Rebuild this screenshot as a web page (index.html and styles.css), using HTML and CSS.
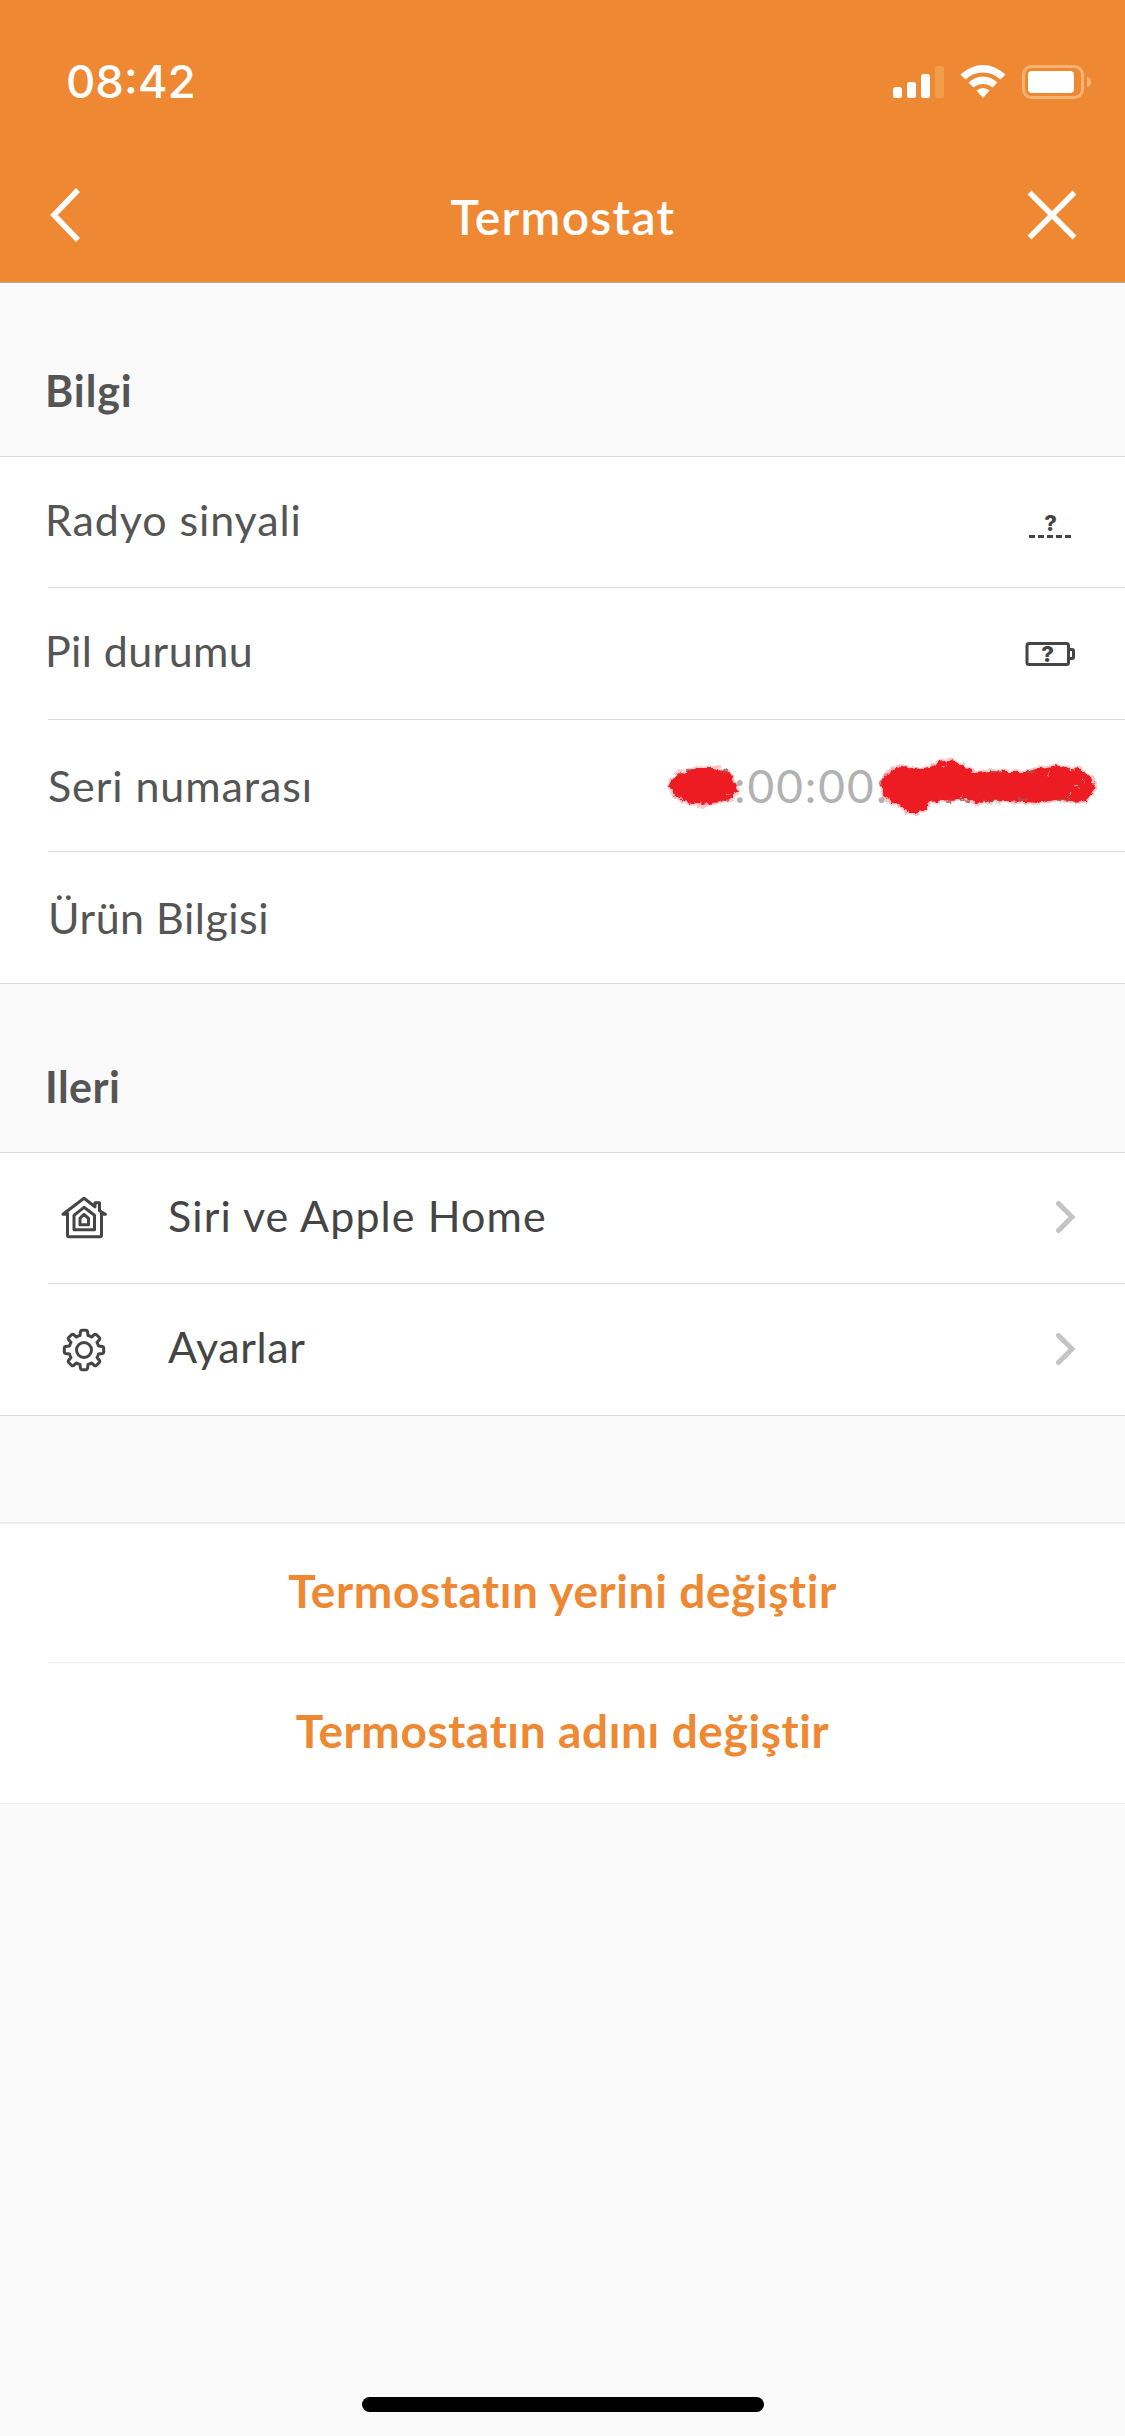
FILE: index.html
```html
<!DOCTYPE html>
<html lang="tr">
<head>
    <meta charset="utf-8">
    <meta name="viewport" content="width=device-width, initial-scale=1">
    <title>Termostat</title>
    <link rel="stylesheet" href="styles.css">
</head>
<body>
    <header class="header">
        <div class="statusbar">
            <span class="clock">08:42</span>
            <svg class="status-icons" viewBox="893 60 200 44" width="200" height="44">
                <g fill="#fff">
                    <rect x="893" y="87" width="9" height="11" rx="2.5"/>
                    <rect x="907" y="82" width="9" height="16" rx="2.5"/>
                    <rect x="921" y="74" width="9" height="24" rx="2.5"/>
                    <rect x="935" y="66" width="9" height="32" rx="2.5" fill="#f19e4c"/>
                    <path d="M960.5 74.5Q971 65 983 65T1005.5 74.5L1000.500 79.500Q993 72.500 983 72.500T965.500 79.500Z"/>
                    <path d="M968.500 82.500Q975 76.500 983 76.500T997.500 82.500L992.500 87.500Q988.500 84 983 84T973.500 87.500Z"/>
                    <path d="M976.500 90.500Q979.500 88 983 88T989.500 90.500L983 98Z"/>
                    <rect x="1028" y="71" width="46" height="22" rx="4"/>
                </g>
                <rect x="1023.500" y="66.500" width="59" height="31" rx="8" fill="none" stroke="#f5b273" stroke-width="3"/>
                <path d="M1087 76.500Q1091 78 1091 82T1087 87.500Z" fill="#f5b273"/>
            </svg>
        </div>
        <nav class="navbar">
            <svg class="nav-icon" viewBox="1 0 60 60" width="60" height="60">
                <path d="M38 5 14 30 38 55" fill="none" stroke="#fff" stroke-width="5.500"/>
            </svg>
            <h1 class="title">Termostat</h1>
            <svg class="nav-icon" viewBox="0 0 60 60" width="60" height="60">
                <path d="M7.500 7.500 52.500 52.500M52.500 7.500 7.500 52.500" fill="none" stroke="#fff" stroke-width="5.500"/>
            </svg>
        </nav>
    </header>

    <main>
        <h2 class="section-title first">Bilgi</h2>
        <ul class="list">
            <li class="row raised">
                <span class="label radio">Radyo sinyali</span>
                <svg class="state-icon" viewBox="1020 506 60 32" width="60" height="32">
                    <text x="1050.500" y="531" class="question">?</text>
                    <path d="M1029 536.500H1071" stroke="#454545" stroke-width="3" stroke-dasharray="6 3"/>
                </svg>
            </li>
            <li class="row raised">
                <span class="label battery">Pil durumu</span>
                <svg class="state-icon" viewBox="1020 638 60 32" width="60" height="32">
                    <g fill="none" stroke="#454545" stroke-width="3">
                        <rect x="1027" y="643.500" width="41.500" height="21" rx="2"/>
                        <path d="M1069 649.500H1072Q1073.500 649.500 1073.500 651V657Q1073.500 658.500 1072 658.500H1069"/>
                    </g>
                    <text x="1047.500" y="661.500" class="question">?</text>
                </svg>
            </li>
            <li class="row">
                <span class="label serial">Seri numarası</span>
                <span class="value">:00:00:
                    <svg class="scribble" viewBox="660 750 440 70" width="440" height="70">
                        <filter id="rough" x="-5%" y="-20%" width="110%" height="140%">
                            <feTurbulence type="fractalNoise" baseFrequency=".16" numOctaves="3" seed="4"/>
                            <feDisplacementMap in="SourceGraphic" scale="7" xChannelSelector="R" yChannelSelector="G"/>
                        </filter>
                        <g filter="url(#rough)">
                            <g fill="#ed1c24" stroke="#ed1c24" stroke-opacity=".25" stroke-width="4" stroke-linejoin="round">
                                <path d="M669 787 672 779 680 772 690 770 699 768 712 768 723 770 731 774 734 783 738 791 732 798 724 802 713 803 704 805 691 803 680 800 674 795Z"/>
                                <path d="M882 790 881 782 887 774 896 768 905 766 916 769 930 767 939 762 949 760 959 763 968 768 977 773 991 771 1008 772 1027 772 1040 768 1054 766 1068 768 1081 769 1090 777 1095 786 1092 794 1085 801 1070 802 1055 800 1040 803 1024 802 1007 801 990 802 976 803 966 799 949 800 930 802 925 810 915 813 907 813 904 807 893 803 886 798Z"/>
                            </g>
                            <path d="M686 770H696M721 771H728M720 801H728M988 772H1002M1027 772H1036M946 801H950M961 801H969M983 801H998M1018 800H1028M1056 800H1070" stroke="#a5565a" stroke-width="2" opacity=".7"/>
                            <path d="M679 797 683 799M727 793 731 796M885 796 890 800M941 767 947 764M960 797 964 794M1046 775 1050 772M1075 785 1080 790M1068 797 1072 793M1082 778 1086 782" stroke="#fff" stroke-width="1" opacity=".6"/>
                        </g>
                    </svg>
                </span>
            </li>
            <li class="row">
                <span class="label product">Ürün Bilgisi</span>
            </li>
        </ul>

        <h2 class="section-title">Ileri</h2>
        <ul class="list">
            <li class="row raised link">
                <svg class="row-icon" viewBox="0.500 1.700 50 50" width="50" height="50">
                    <g fill="none" stroke="#454545" stroke-width="3" stroke-linejoin="round" stroke-linecap="round">
                        <path d="M9 22V44Q9 45.500 10.500 45.500H41.500Q43 45.500 43 44V22M9 23H4.500L25.500 7 36.500 15.500V11.500H41V19.500L47 23H43"/>
                        <path d="M15.500 24 25.500 16 36 24V38.500H15.500Z"/>
                        <path d="M21.500 27 25.500 23 30 27V33.500H21.500Z"/>
                    </g>
                </svg>
                <span class="label siri">Siri ve Apple Home</span>
                <svg class="chevron" viewBox="2 1.500 24 36" width="24" height="36">
                    <path d="M4.500 5 18 18.500 4.500 32" fill="none" stroke="#c4c4c6" stroke-width="5" stroke-linecap="round"/>
                </svg>
            </li>
            <li class="row raised link">
                <svg class="row-icon" viewBox="-25 -25 50 50" width="50" height="50">
                    <g fill="none" stroke="#454545" stroke-width="3" stroke-linejoin="round">
                        <circle r="7.500"/>
                        <path d="M-4 -14.500 -3.500 -18.500Q-3.200 -19.700 -2 -19.700H2Q3.200 -19.700 3.500 -18.500L4 -14.500Q6 -14 7.500 -13L10.500 -15.500Q11.500 -16.200 12.500 -15.300L15.300 -12.500Q16.200 -11.500 15.500 -10.500L13 -7.500Q14 -6 14.500 -4L18.500 -3.500Q19.700 -3.200 19.700 -2V2Q19.700 3.200 18.500 3.500L14.500 4Q14 6 13 7.500L15.500 10.500Q16.200 11.500 15.300 12.500L12.500 15.300Q11.500 16.200 10.500 15.500L7.500 13Q6 14 4 14.500L3.500 18.500Q3.200 19.700 2 19.700H-2Q-3.200 19.700 -3.500 18.500L-4 14.500Q-6 14 -7.500 13L-10.500 15.500Q-11.500 16.200 -12.500 15.300L-15.300 12.500Q-16.200 11.500 -15.500 10.500L-13 7.500Q-14 6 -14.500 4L-18.500 3.500Q-19.700 3.200 -19.700 2V-2Q-19.700 -3.200 -18.500 -3.500L-14.500 -4Q-14 -6 -13 -7.500L-15.500 -10.500Q-16.200 -11.500 -15.300 -12.500L-12.500 -15.300Q-11.500 -16.200 -10.500 -15.500L-7.500 -13Q-6 -14 -4 -14.500Z"/>
                    </g>
                </svg>
                <span class="label settings">Ayarlar</span>
                <svg class="chevron" viewBox="2 1.500 24 36" width="24" height="36">
                    <path d="M4.500 5 18 18.500 4.500 32" fill="none" stroke="#c4c4c6" stroke-width="5" stroke-linecap="round"/>
                </svg>
            </li>
        </ul>

        <div class="list actions">
            <button class="action">Termostatın yerini değiştir</button>
            <button class="action">Termostatın adını değiştir</button>
        </div>
    </main>

    <div class="home-indicator"></div>
</body>
</html>
```
FILE: styles.css
```css
* {
    box-sizing: border-box;
}
body {
    margin: 0;
    height: 2436px;
    display: flex;
    flex-direction: column;
    background: #fafafa;
    font-family: Lato, "Open Sans", sans-serif;
    color: #555;
}
h1, h2, ul {
    margin: 0;
    padding: 0;
}
.header {
    height: 283px;
    background: #ef8833;
    border-bottom: 1px solid #b2a8a0;
    color: #fff;
}
.statusbar {
    height: 132px;
    padding: 60px 32px 0 66px;
    display: flex;
    justify-content: space-between;
    align-items: flex-start;
}
.clock {
    font-family: Inter, sans-serif;
    font-size: 45.5px;
    font-weight: 500;
    line-height: 44px;
}
.navbar {
    height: 169px;
    padding: 0 43px 4px 41px;
    display: flex;
    justify-content: space-between;
    align-items: center;
}
.title {
    padding: 3px 0 0 3px;
    font-size: 48px;
    font-weight: 600;
    letter-spacing: 1.3px;
}
.section-title {
    height: 168px;
    padding: 66px 0 0 45px;
    font-size: 43px;
    font-weight: 700;
    line-height: 74px;
    letter-spacing: 0.5px;
}
.section-title.first {
    height: 173px;
    padding-top: 71px;
    letter-spacing: 0.9px;
}
.list {
    background: #fff;
    border-top: 1px solid #dcdcde;
    border-bottom: 1px solid #dcdcde;
    list-style: none;
}
.row {
    height: 132px;
    margin-left: 48px;
    padding-right: 45px;
    display: flex;
    align-items: center;
    border-bottom: 1px solid #dcdcde;
    font-size: 43px;
}
.row:first-child {
    height: 131px;
}
.row:last-child {
    height: 131px;
    border-bottom: 0;
}
.raised .label {
    padding-bottom: 6px;
}
.label {
    margin-right: auto;
    letter-spacing: 0.9px;
}
.radio, .battery {
    margin-left: -3px;
}
.battery {
    letter-spacing: 0.4px;
}
.product {
    letter-spacing: 0.5px;
}
.siri {
    letter-spacing: 1.1px;
}
.settings {
    letter-spacing: 0.6px;
}
.question {
    font-family: Inter, sans-serif;
    font-size: 22px;
    font-weight: 800;
    fill: #454545;
    text-anchor: middle;
}
.value {
    position: relative;
    width: 440px;
    margin-right: -20px;
    padding-left: 74px;
    color: #b2b2b2;
    font-size: 46px;
    letter-spacing: 2px;
}
/* red marker over the hidden parts of the serial */
.scribble {
    position: absolute;
    left: 0;
    top: -8px;
}
.link {
    color: #454545;
}
.row-icon {
    margin: 0 59px 0 11px;
}
.actions {
    margin-top: 106px;
    border-top-width: 2px;
    border-color: #ececee;
}
.action {
    display: block;
    width: calc(100% - 48px);
    height: 139px;
    margin-left: 48px;
    padding: 0 48px 5px 0;
    background: none;
    border: 0;
    border-bottom: 1px solid #ececee;
    color: #ef8833;
    font-family: inherit;
    font-size: 46px;
    font-weight: 700;
    letter-spacing: 0.6px;
}
.action:last-child {
    height: 140px;
    border-bottom: 0;
}
.home-indicator {
    width: 402px;
    height: 15px;
    margin: auto auto 24px 362px;
    border-radius: 8px;
    background: #000;
}
```
